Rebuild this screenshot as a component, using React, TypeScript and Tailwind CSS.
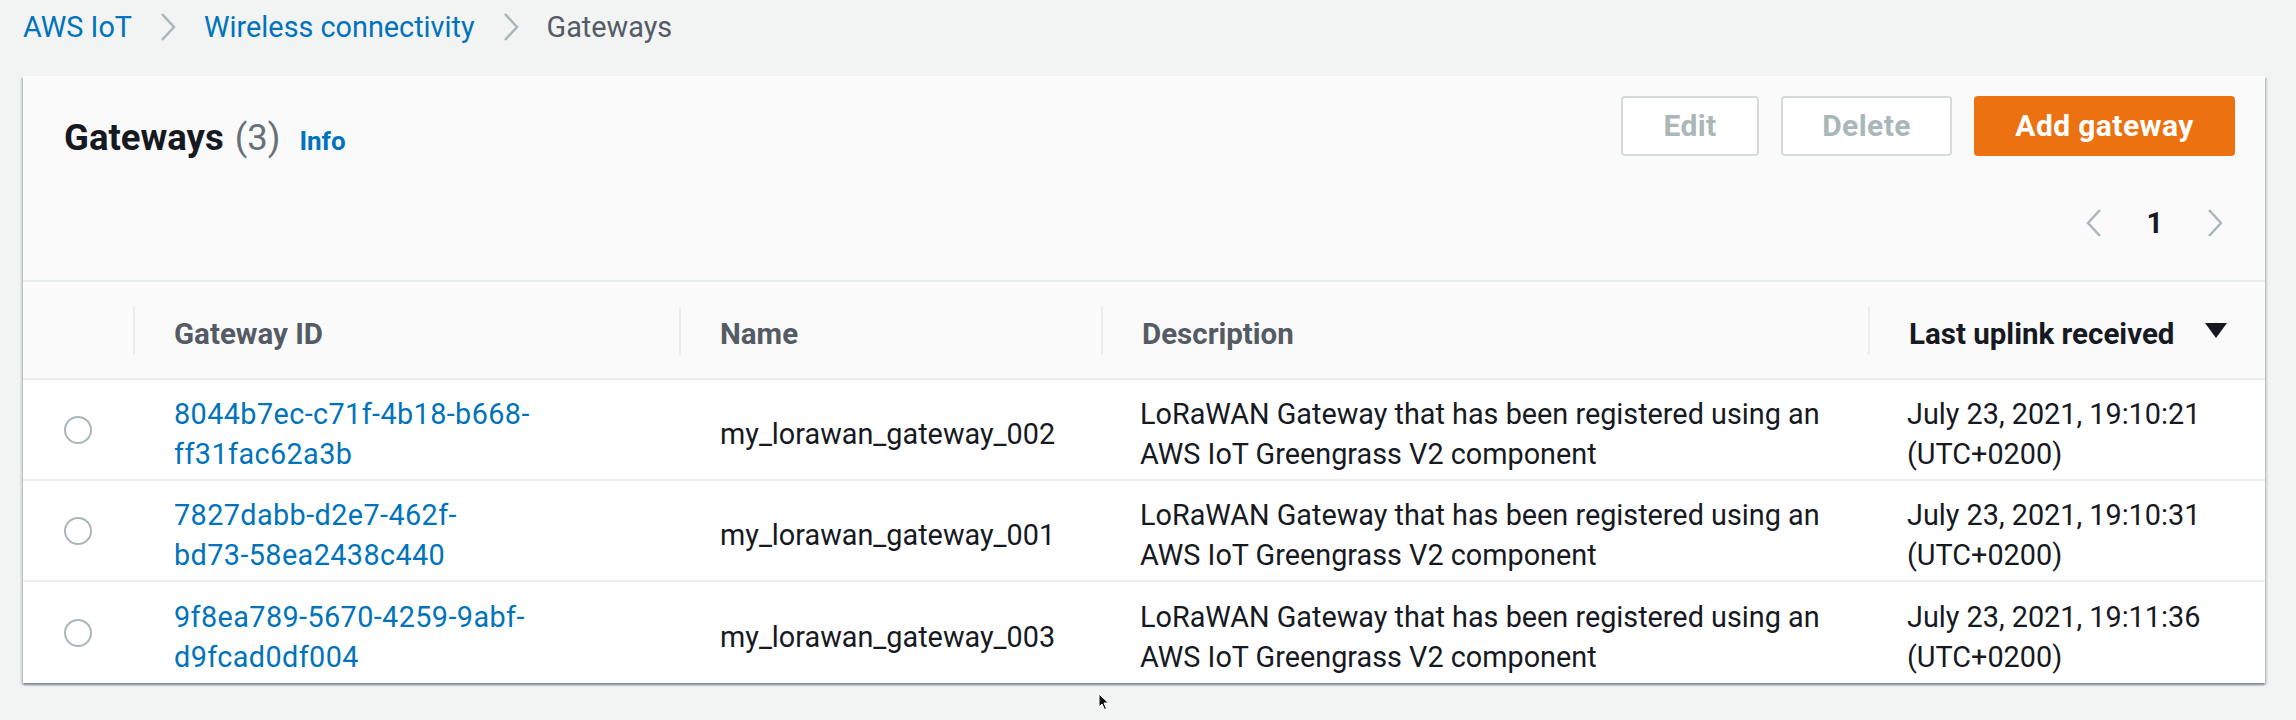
import React from 'react'

interface Gateway {
  id: [string, string]
  name: string
  received: string
}

const GATEWAYS: Gateway[] = [
  { id: ['8044b7ec-c71f-4b18-b668-', 'ff31fac62a3b'], name: 'my_lorawan_gateway_002', received: 'July 23, 2021, 19:10:21' },
  { id: ['7827dabb-d2e7-462f-', 'bd73-58ea2438c440'], name: 'my_lorawan_gateway_001', received: 'July 23, 2021, 19:10:31' },
  { id: ['9f8ea789-5670-4259-9abf-', 'd9fcad0df004'], name: 'my_lorawan_gateway_003', received: 'July 23, 2021, 19:11:36' },
]

const COLS = 'grid grid-cols-[110px_546px_422px_767px_397px]'

function ChevronRight({ className = '' }: { className?: string }) {
  return (
    <svg width="20" height="30" viewBox="0 0 20 30" className={className}>
      <path d="M4 2 L16 15 L4 28" fill="none" stroke="#aab7b8" strokeWidth="2.5" />
    </svg>
  )
}

function ChevronLeft() {
  return (
    <svg width="20" height="30" viewBox="0 0 20 30">
      <path d="M16 2 L4 15 L16 28" fill="none" stroke="#aab7b8" strokeWidth="2.5" />
    </svg>
  )
}

function HeaderCell({ label, active = false }: { label: string; active?: boolean }) {
  return (
    <div className="relative flex items-center pl-[41px] pr-[20px] pt-[8px] text-[29.5px]">
      <span className="absolute left-0 top-[25px] h-[48px] w-[2px] bg-[#eaeded]" />
      <span className={active ? 'font-bold text-[#16191f]' : 'font-bold text-[#545b64]'}>{label}</span>
      {active && (
        <svg width="22" height="16" viewBox="0 0 22 16" className="ml-auto mr-[18px] -mt-[6px]">
          <polygon points="0,0 22,0 11,15" fill="#16191f" />
        </svg>
      )}
    </div>
  )
}

export default function App() {
  return (
    <div className="relative w-[2296px] h-[720px] overflow-hidden bg-[#f2f3f3] font-['Roboto','Noto_Sans',sans-serif] text-[28.8px] leading-[40px] text-[#16191f]">
      <nav className="flex items-center h-[40px] mt-[7px] ml-[23px] gap-[26px]">
        <span className="text-[#0073bb]">AWS IoT</span>
        <ChevronRight />
        <span className="text-[#0073bb]">Wireless connectivity</span>
        <ChevronRight />
        <span className="text-[#545b64]">Gateways</span>
      </nav>

      <div className="mt-[29px] ml-[23px] w-[2242px] bg-white shadow-[0_2px_2px_0_rgba(0,28,36,0.3),2px_2px_2px_0_rgba(0,28,36,0.15),-2px_2px_2px_0_rgba(0,28,36,0.15)]">
        <div className="h-[204px] bg-[#fafafa] pt-[20px] pl-[41px] pr-[30px]">
          <div className="flex justify-between items-start">
            <h2 className="flex items-baseline pt-[20px] text-[36.5px] leading-[44px]">
              <span className="font-bold">Gateways</span>
              <span className="ml-[11px] text-[#687078]">(3)</span>
              <span className="ml-[19px] text-[26px] font-bold text-[#0073bb]">Info</span>
            </h2>
            <div className="flex gap-[22px] text-[30px] tracking-[0.4px]">
              <button className="w-[138px] h-[60px] rounded-[4px] border-2 border-[#d5dbdb] bg-white font-bold text-[#aab7b8]">
                Edit
              </button>
              <button className="w-[171px] h-[60px] rounded-[4px] border-2 border-[#d5dbdb] bg-white font-bold text-[#aab7b8]">
                Delete
              </button>
              <button className="w-[261px] h-[60px] rounded-[4px] border-2 border-[#ec7211] bg-[#ec7211] font-bold text-white">
                Add gateway
              </button>
            </div>
          </div>
          <div className="flex justify-end items-center h-[40px] mt-[40px] mr-[10px] gap-[42px]">
            <ChevronLeft />
            <span className="font-bold">1</span>
            <ChevronRight />
          </div>
        </div>

        <div className={`${COLS} h-[100px] border-t-2 border-b-2 border-[#eaeded] bg-[#fafafa]`}>
          <div />
          <HeaderCell label="Gateway ID" />
          <HeaderCell label="Name" />
          <HeaderCell label="Description" />
          <HeaderCell label="Last uplink received" active />
        </div>

        {GATEWAYS.map((g, i) => (
          <div
            key={g.name}
            className={`${COLS} h-[101px] ${i < GATEWAYS.length - 1 ? 'border-b-2 border-[#eaeded]' : ''}`}
          >
            <div className="flex items-center justify-center">
              <span className="w-[28px] h-[28px] rounded-full border-2 border-[#aab7b8] bg-white" />
            </div>
            <div className="flex flex-col justify-center pl-[41px] pt-[9px] tracking-[0.4px] text-[#0073bb]">
              <span>{g.id[0]}</span>
              <span>{g.id[1]}</span>
            </div>
            <div className="flex items-center pl-[41px] pt-[8px]">{g.name}</div>
            <div className="flex flex-col justify-center pl-[39px] pt-[9px]">
              <span>LoRaWAN Gateway that has been registered using an</span>
              <span>AWS IoT Greengrass V2 component</span>
            </div>
            <div className="flex flex-col justify-center pl-[39px] pt-[9px]">
              <span>{g.received}</span>
              <span>(UTC+0200)</span>
            </div>
          </div>
        ))}
      </div>

      <svg width="12" height="18" viewBox="0 0 12 18" className="absolute left-[1098px] top-[693px]">
        <path d="M1 1 L1 14 L4 11 L6.5 16.5 L8.5 15.5 L6 10 L10.5 10 Z" fill="#111" stroke="#fff" strokeWidth="1" />
      </svg>
    </div>
  )
}
